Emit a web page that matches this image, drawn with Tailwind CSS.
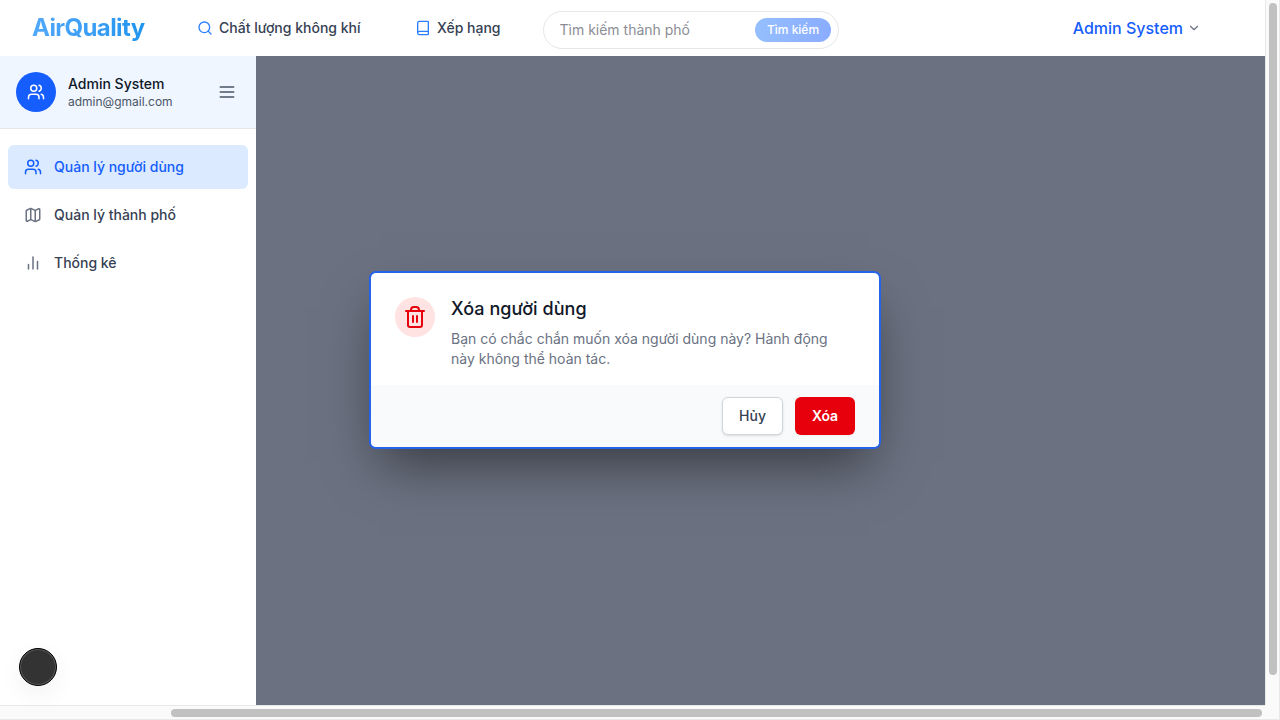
<!DOCTYPE html>
<html lang="vi">
<head>
<meta charset="utf-8">
<title>AirQuality</title>
<script src="https://cdn.jsdelivr.net/npm/@tailwindcss/browser@4"></script>
</head>
<body class="h-screen w-screen overflow-hidden bg-white font-['Inter','Noto_Sans',sans-serif] antialiased">
<div class="grid h-[720px] w-[1280px] grid-cols-[1265px_15px] grid-rows-[705px_15px]">
  <div class="flex min-h-0 flex-col overflow-hidden">
    <header class="flex h-14 shrink-0 items-center bg-white pl-8">
      <div class="w-[165px] shrink-0"><span class="inline-block bg-linear-to-r from-[#51a8fb] to-[#1f95ee] bg-clip-text text-2xl font-bold tracking-tight text-transparent">AirQuality</span></div>
      <a class="flex w-[218px] shrink-0 items-center gap-[6px] text-sm font-medium text-gray-700">
        <svg class="size-4 text-blue-500" viewBox="0 0 24 24" fill="none" stroke="currentColor" stroke-width="2" stroke-linecap="round" stroke-linejoin="round"><circle cx="11" cy="11" r="8"/><path d="m21 21-4.35-4.35"/></svg>
        Chất lượng không khí
      </a>
      <a class="flex w-32 shrink-0 items-center gap-[6px] text-sm font-medium text-gray-700">
        <svg class="size-4 text-blue-500" viewBox="0 0 24 24" fill="none" stroke="currentColor" stroke-width="2" stroke-linecap="round" stroke-linejoin="round"><path d="M4 19.5v-15A2.5 2.5 0 0 1 6.5 2H19a1 1 0 0 1 1 1v18a1 1 0 0 1-1 1H6.5a1 1 0 0 1 0-5H20"/></svg>
        Xếp hạng
      </a>
      <div class="mt-[3px] flex h-[38px] w-[296px] shrink-0 items-center justify-between rounded-full border border-gray-200 bg-white pr-[7px] pl-[15.5px]">
        <span class="text-sm text-[#8b8d94]">Tìm kiếm thành phố</span>
        <button class="h-6 w-[76px] rounded-full bg-linear-to-r from-[#95bffe] to-[#8aacff] text-xs font-medium text-white">Tìm kiếm</button>
      </div>
      <div class="ml-auto flex items-center gap-1 pr-16 text-base font-medium text-blue-600">Admin System
        <svg class="size-[14px] text-gray-500" viewBox="0 0 24 24" fill="none" stroke="currentColor" stroke-width="2" stroke-linecap="round" stroke-linejoin="round"><path d="m6 9 6 6 6-6"/></svg>
      </div>
    </header>
    <div class="flex min-h-0 flex-1">
      <aside class="relative flex w-64 shrink-0 flex-col bg-white">
        <div class="flex h-[73px] shrink-0 items-center border-b border-gray-200 bg-blue-50 px-4">
          <div class="flex size-10 items-center justify-center rounded-full bg-blue-600 text-white">
            <svg class="size-[18px]" viewBox="0 0 24 24" fill="none" stroke="currentColor" stroke-width="2" stroke-linecap="round" stroke-linejoin="round"><path d="M16 21v-2a4 4 0 0 0-4-4H6a4 4 0 0 0-4 4v2"/><circle cx="9" cy="7" r="4"/><path d="M22 21v-2a4 4 0 0 0-3-3.87M16 3.13a4 4 0 0 1 0 7.75"/></svg>
          </div>
          <div class="ml-3">
            <p class="text-sm font-medium text-gray-900">Admin System</p>
            <p class="text-xs text-gray-600">admin@gmail.com</p>
          </div>
          <svg class="mr-[3px] ml-auto size-5 text-gray-600" viewBox="0 0 24 24" fill="none" stroke="currentColor" stroke-width="2" stroke-linecap="round"><path d="M4 6h16M4 12h16M4 18h16"/></svg>
        </div>
        <nav class="flex flex-col gap-1 px-2 pt-4 text-sm font-medium text-gray-700">
          <a class="flex h-11 items-center gap-3 rounded-md bg-blue-100 px-4 text-blue-600">
            <svg class="size-[18px]" viewBox="0 0 24 24" fill="none" stroke="currentColor" stroke-width="2" stroke-linecap="round" stroke-linejoin="round"><path d="M16 21v-2a4 4 0 0 0-4-4H6a4 4 0 0 0-4 4v2"/><circle cx="9" cy="7" r="4"/><path d="M22 21v-2a4 4 0 0 0-3-3.87M16 3.13a4 4 0 0 1 0 7.75"/></svg>
            Quản lý người dùng</a>
          <a class="flex h-11 items-center gap-3 rounded-md px-4">
            <svg class="size-[18px] text-gray-500" viewBox="0 0 24 24" fill="none" stroke="currentColor" stroke-width="2" stroke-linecap="round" stroke-linejoin="round"><path d="M14.1 5.55a2 2 0 0 0 1.8 0l3.65-1.83A1 1 0 0 1 21 4.62v12.76a1 1 0 0 1-.55.9l-4.55 2.27a2 2 0 0 1-1.8 0l-4.2-2.1a2 2 0 0 0-1.8 0l-3.65 1.83A1 1 0 0 1 3 19.38V6.62a1 1 0 0 1 .55-.9L8.1 3.45a2 2 0 0 1 1.8 0zM15 5.76v15M9 3.24v15"/></svg>
            Quản lý thành phố</a>
          <a class="flex h-11 items-center gap-3 rounded-md px-4">
            <svg class="size-[18px] text-gray-500" viewBox="0 0 24 24" fill="none" stroke="currentColor" stroke-width="2" stroke-linecap="round" stroke-linejoin="round"><path d="M18 20V10M12 20V4M6 20v-6"/></svg>
            Thống kê</a>
        </nav>
        <div class="absolute bottom-[19px] left-[19px] size-[38px] rounded-full border border-black bg-[#333] shadow-[inset_0_0_0_1px_#5c5c5c,0_8px_24px_#0000000f]"></div>
      </aside>
      <main class="relative min-w-0 flex-1 overflow-hidden bg-[#6b7180]">
        <section class="absolute top-[217px] left-[115px] w-[508px] rounded-[5px] bg-white shadow-[0_0_0_2px_#2563eb,0_25px_50px_-10px_rgba(0,0,0,0.5)]">
          <div class="flex h-28 gap-4 px-6 pt-6">
            <div class="flex size-10 shrink-0 items-center justify-center rounded-full bg-[#ffe2e2]">
              <svg class="size-6 text-[#e7000b]" viewBox="0 0 24 24" fill="none" stroke="currentColor" stroke-width="2" stroke-linecap="round" stroke-linejoin="round"><path d="M3 6h18M19 6v14a2 2 0 0 1-2 2H7a2 2 0 0 1-2-2V6M8 6V5a3 3 0 0 1 3-3h2a3 3 0 0 1 3 3v1M10 11v6M14 11v6"/></svg>
            </div>
            <div>
              <h3 class="text-lg leading-6 font-medium tracking-[0.003em] text-gray-900">Xóa người dùng</h3>
              <p class="mt-2 text-sm text-gray-500">Bạn có chắc chắn muốn xóa người dùng này? Hành động này không thể hoàn tác.</p>
            </div>
          </div>
          <div class="flex h-[62px] items-center justify-end gap-3 rounded-b-[5px] bg-gray-50 px-6">
            <button class="h-[38px] w-[61px] rounded-md border border-gray-300 bg-white text-sm font-medium text-gray-700 shadow-sm">Hủy</button>
            <button class="h-[38px] w-[60px] rounded-md bg-[#e7000b] text-sm font-semibold tracking-[-0.01em] text-white shadow-xs">Xóa</button>
          </div>
        </section>
      </main>
    </div>
  </div>
  <div class="flex justify-center border-x border-[#e8e8e8] bg-[#fafafa] pt-[3px]"><div class="h-[672px] w-2 rounded-full bg-[#c1c1c1]"></div></div>
  <div class="flex items-center border-y border-[#e8e8e8] bg-[#fafafa] pl-[171px]"><div class="h-2 w-[1091px] rounded-full bg-[#c1c1c1]"></div></div>
  <div class="border-r border-b border-[#e8e8e8] bg-[#fafafa]"></div>
</div>
</body>
</html>
